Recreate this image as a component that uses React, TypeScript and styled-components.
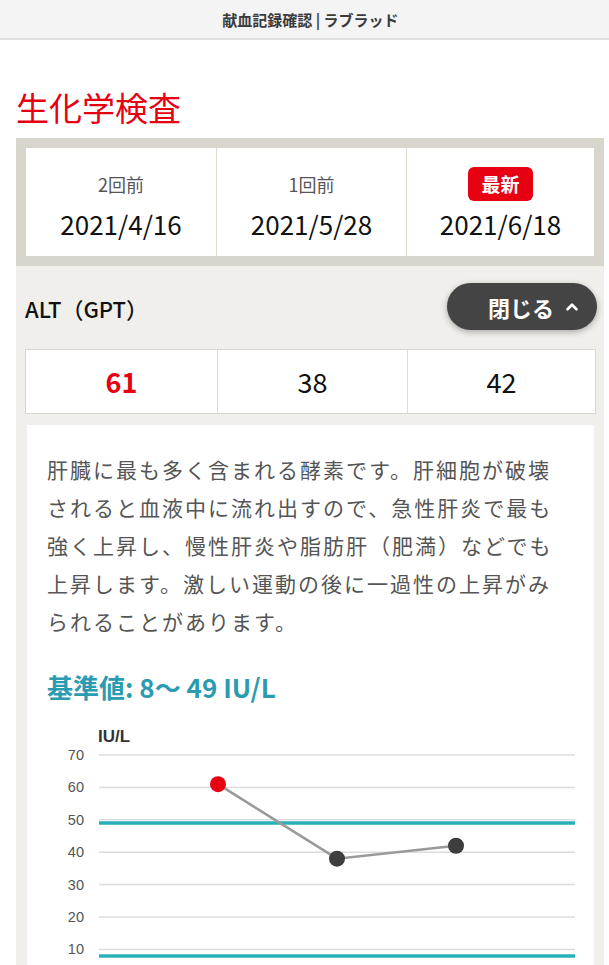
import React from 'react';
import styled, { createGlobalStyle } from 'styled-components';
import { ChevronUp } from 'lucide-react';

const GlobalStyle = createGlobalStyle`
  body {
    margin: 0;
    background: #fff;
    font-family: "Noto Sans CJK JP", "Noto Sans", sans-serif;
    color: #111;
  }
`;

const TopBar = styled.header`
  height: 38px;
  background: #f4f4f4;
  border-bottom: 2px solid #e0e0e0;
  display: flex;
  align-items: center;
  justify-content: center;
  padding-left: 12px;
  font-size: 15px;
  font-weight: 700;
  color: #3a3a3a;
`;

const Main = styled.main`
  padding: 0 5px 0 16px;
`;

const Title = styled.h1`
  margin: 44px 0 8px;
  font-size: 33px;
  line-height: 46px;
  font-weight: 400;
  color: #e60012;
`;

const Panel = styled.section`
  background: #f0efeb;
`;

const DateTable = styled.div`
  display: grid;
  grid-template-columns: 190px 190px 1fr;
  border: 10px solid #d8d5cd;
  background: #fff;
`;

const DateCell = styled.div`
  height: 108px;
  box-sizing: border-box;
  padding-top: 19px;
  display: flex;
  flex-direction: column;
  align-items: center;
  & + & {
    border-left: 1px solid #dedbd3;
  }
`;

const LabelSlot = styled.div`
  height: 34px;
  margin-bottom: 5px;
  display: flex;
  align-items: center;
  font-size: 18px;
  color: #555;
`;

const Badge = styled.span`
  background: #e60012;
  color: #fff;
  font-size: 19px;
  font-weight: 700;
  line-height: 34px;
  padding: 0 13px;
  border-radius: 6px;
`;

const DateText = styled.div`
  font-size: 26px;
  line-height: 36px;
  color: #111;
`;

const Body = styled.div`
  padding: 17px 8px 0 9px;
`;

const ItemHead = styled.div`
  display: flex;
  align-items: center;
  justify-content: space-between;
  height: 47px;
  margin-bottom: 19px;
`;

const ItemName = styled.span`
  font-size: 22px;
  font-weight: 500;
  color: #111;
  padding-top: 3px;
`;

const ToggleButton = styled.button`
  display: flex;
  align-items: center;
  gap: 9px;
  height: 47px;
  width: 150px;
  margin-right: -1px;
  padding: 0 0 0 41px;
  box-sizing: border-box;
  border: none;
  border-radius: 24px;
  background: #444;
  color: #fff;
  font-family: inherit;
  font-size: 22px;
  font-weight: 700;
  box-shadow: 0 2px 6px rgba(0, 0, 0, 0.3);
  cursor: pointer;
`;

const ValueTable = styled.div`
  display: grid;
  grid-template-columns: 191px 190px 1fr;
  border: 1px solid #d9d6ce;
  background: #fff;
  margin-bottom: 11px;
`;

const ValueCell = styled.div<{ $alert?: boolean }>`
  height: 63px;
  display: flex;
  align-items: center;
  justify-content: center;
  font-size: 27px;
  color: ${(p) => (p.$alert ? '#e60012' : '#111')};
  font-weight: ${(p) => (p.$alert ? 700 : 400)};
  & + & {
    border-left: 1px solid #dedbd3;
  }
`;

const InfoBox = styled.div`
  margin: 0 2px;
  background: #fff;
  padding: 25px 20px 0;
  height: 560px;
`;

const Description = styled.p`
  margin: 0 16px 0 0;
  font-size: 21px;
  line-height: 38px;
  letter-spacing: 2px;
  color: #555;
`;

const RangeHeading = styled.h3`
  margin: 32px 0 17px;
  font-size: 26px;
  line-height: 30px;
  font-weight: 700;
  color: #2a9bb0;
`;

const ChartSvg = styled.svg`
  display: block;
  margin-left: -20px;
  font-family: "Liberation Sans", Arial, sans-serif;
`;

const values = [61, 38, 42];
const dates = [
  { label: '2回前', date: '2021/4/16' },
  { label: '1回前', date: '2021/5/28' },
  { label: '最新', date: '2021/6/18', latest: true },
];

const yOf = (v: number) => 36 + (70 - v) * 3.24;
const xOf = (i: number) => 72 + 119 * (i + 1);

const Chart: React.FC = () => {
  const ticks = [70, 60, 50, 40, 30, 20, 10];
  return (
    <ChartSvg width={567} height={260} viewBox="0 0 567 260">
      <text x={71} y={23} fontSize={17} fontWeight={700} fill="#333">
        IU/L
      </text>
      {ticks.map((t) => (
        <g key={t}>
          <line x1={72} x2={548} y1={yOf(t)} y2={yOf(t)} stroke="#dcdcdc" strokeWidth={1.5} />
          <text x={57} y={yOf(t) + 5} fontSize={14.5} fill="#555" textAnchor="end">
            {t}
          </text>
        </g>
      ))}
      <line x1={72} x2={548} y1={yOf(49)} y2={yOf(49)} stroke="#27b0ba" strokeWidth={3.5} />
      <line x1={72} x2={548} y1={yOf(8)} y2={yOf(8)} stroke="#27b0ba" strokeWidth={3.5} />
      <polyline
        points={values.map((v, i) => `${xOf(i)},${yOf(v)}`).join(' ')}
        fill="none"
        stroke="#999"
        strokeWidth={2.5}
      />
      {values.map((v, i) => (
        <circle key={i} cx={xOf(i)} cy={yOf(v)} r={8} fill={v > 49 ? '#e60012' : '#3d3d3d'} />
      ))}
    </ChartSvg>
  );
};

const App: React.FC = () => {
  return (
    <>
      <GlobalStyle />
      <TopBar>献血記録確認 | ラブラッド</TopBar>
      <Main>
        <Title>生化学検査</Title>
        <Panel>
          <DateTable>
            {dates.map((d) => (
              <DateCell key={d.date}>
                <LabelSlot>{d.latest ? <Badge>{d.label}</Badge> : d.label}</LabelSlot>
                <DateText>{d.date}</DateText>
              </DateCell>
            ))}
          </DateTable>
          <Body>
            <ItemHead>
              <ItemName>ALT（GPT）</ItemName>
              <ToggleButton>
                閉じる
                <ChevronUp size={18} strokeWidth={3.5} />
              </ToggleButton>
            </ItemHead>
            <ValueTable>
              {values.map((v, i) => (
                <ValueCell key={i} $alert={v > 49}>
                  {v}
                </ValueCell>
              ))}
            </ValueTable>
            <InfoBox>
              <Description>
                肝臓に最も多く含まれる酵素です。肝細胞が破壊されると血液中に流れ出すので、急性肝炎で最も強く上昇し、慢性肝炎や脂肪肝（肥満）などでも上昇します。激しい運動の後に一過性の上昇がみられることがあります。
              </Description>
              <RangeHeading>基準値: 8〜 49 IU/L</RangeHeading>
              <Chart />
            </InfoBox>
          </Body>
        </Panel>
      </Main>
    </>
  );
};

export default App;
